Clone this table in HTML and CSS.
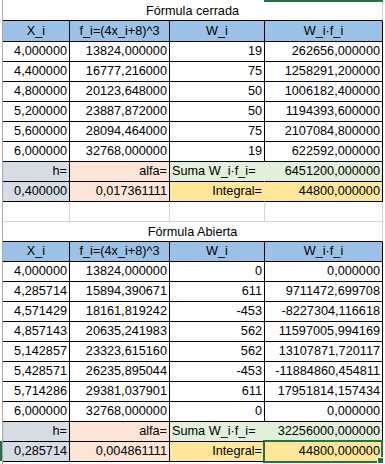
FILE: index.html
```html
<!DOCTYPE html>
<html lang="es">
<head>
<meta charset="utf-8">
<title>Fórmulas de integración</title>
<link rel="stylesheet" href="styles.css">
</head>
<body>
<div class="page">
  <div class="sheet">
    <div class="c title t1">Fórmula cerrada</div>

    <div class="c hd h1">X_i</div>
    <div class="c hd h1">f_i=(4x_i+8)^3</div>
    <div class="c hd h1">W_i</div>
    <div class="c hd h1">W_i·f_i</div>

    <div class="c">4,000000</div><div class="c">13824,000000</div><div class="c">19</div><div class="c">262656,000000</div>
    <div class="c">4,400000</div><div class="c">16777,216000</div><div class="c">75</div><div class="c">1258291,200000</div>
    <div class="c">4,800000</div><div class="c">20123,648000</div><div class="c">50</div><div class="c">1006182,400000</div>
    <div class="c">5,200000</div><div class="c">23887,872000</div><div class="c">50</div><div class="c">1194393,600000</div>
    <div class="c">5,600000</div><div class="c">28094,464000</div><div class="c">75</div><div class="c">2107084,800000</div>
    <div class="c">6,000000</div><div class="c">32768,000000</div><div class="c">19</div><div class="c">622592,000000</div>

    <div class="c bh">h=</div><div class="c ba">alfa=</div><div class="c bs open lab">Suma W_i·f_i=</div><div class="c bs">6451200,000000</div>
    <div class="c bh">0,400000</div><div class="c ba">0,017361111</div><div class="c bi open">Integral=</div><div class="c bi">44800,000000</div>

    <div class="c grid"></div><div class="c grid"></div><div class="c grid"></div><div class="c grid"></div>

    <div class="c title">Fórmula Abierta</div>

    <div class="c hd">X_i</div>
    <div class="c hd">f_i=(4x_i+8)^3</div>
    <div class="c hd">W_i</div>
    <div class="c hd">W_i·f_i</div>

    <div class="c">4,000000</div><div class="c">13824,000000</div><div class="c">0</div><div class="c">0,000000</div>
    <div class="c">4,285714</div><div class="c">15894,390671</div><div class="c">611</div><div class="c">9711472,699708</div>
    <div class="c">4,571429</div><div class="c">18161,819242</div><div class="c">-453</div><div class="c">-8227304,116618</div>
    <div class="c">4,857143</div><div class="c">20635,241983</div><div class="c">562</div><div class="c">11597005,994169</div>
    <div class="c">5,142857</div><div class="c">23323,615160</div><div class="c">562</div><div class="c">13107871,720117</div>
    <div class="c">5,428571</div><div class="c">26235,895044</div><div class="c">-453</div><div class="c">-11884860,454811</div>
    <div class="c">5,714286</div><div class="c">29381,037901</div><div class="c">611</div><div class="c">17951814,157434</div>
    <div class="c">6,000000</div><div class="c">32768,000000</div><div class="c">0</div><div class="c">0,000000</div>

    <div class="c bh">h=</div><div class="c ba">alfa=</div><div class="c bs open lab">Suma W_i·f_i=</div><div class="c bs">32256000,000000</div>
    <div class="c bh">0,285714</div><div class="c ba">0,004861111</div><div class="c bi open">Integral=</div><div class="c bi">44800,000000</div>

    <div class="c tail"></div><div class="c tail"></div><div class="c tail"></div><div class="c tail"></div>
  </div>

  <div class="col-mark"></div>
  <div class="row-mark"></div>
  <div class="selection"><span class="handle"></span></div>
</div>
</body>
</html>
```

FILE: styles.css
```css
html, body {
  margin: 0;
  padding: 0;
  background: #ffffff;
}

body {
  font-family: "Liberation Sans", Arial, sans-serif;
  font-size: 12.7px;
  color: #000000;
  overflow: hidden;
}

.page {
  position: relative;
  width: 385px;
  height: 464px;
}

.sheet {
  display: grid;
  grid-template-columns: 67px 100px 95px 118px;
  margin-left: 2px;
  border-left: 1px solid #a5a5a5;
  width: 380px;
}

.c {
  box-sizing: border-box;
  height: 20px;
  border-right: 1px solid #000000;
  border-bottom: 1px solid #000000;
  padding: 0 2px 1px 2px;
  line-height: 17px;
  display: flex;
  align-items: flex-end;
  justify-content: flex-end;
  white-space: nowrap;
  overflow: visible;
}

.title {
  grid-column: 1 / -1;
  justify-content: center;
  border-right-color: #d4d4d4;
  padding-bottom: 0;
}

.t1 {
  height: 21px;
}

.hd {
  background: #9bc2e6;
  justify-content: center;
}

.h1 {
  height: 21px;
}

.bh {
  background: #d6dce4;
}

.ba {
  background: #fce4d6;
}

.bs {
  background: #e2efda;
}

.bi {
  background: #ffe699;
}

.open {
  border-right-color: transparent;
}

.lab {
  justify-content: flex-start;
}

.grid {
  border-right-color: #d4d4d4;
  border-bottom-color: #d4d4d4;
}

.tail {
  height: 3px;
  border-right-color: #d4d4d4;
  border-bottom: none;
}

.col-mark {
  position: absolute;
  left: 264px;
  top: 0;
  width: 119px;
  height: 2px;
  background: #217346;
}

.row-mark {
  position: absolute;
  left: 0;
  top: 441px;
  width: 2px;
  height: 20px;
  background: #217346;
}

.selection {
  position: absolute;
  left: 263px;
  top: 440px;
  width: 120px;
  height: 23px;
  box-sizing: border-box;
  border: 2px solid #217346;
}

.handle {
  position: absolute;
  right: -3px;
  bottom: -3px;
  width: 5px;
  height: 5px;
  background: #217346;
  border: 1px solid #ffffff;
}
```
